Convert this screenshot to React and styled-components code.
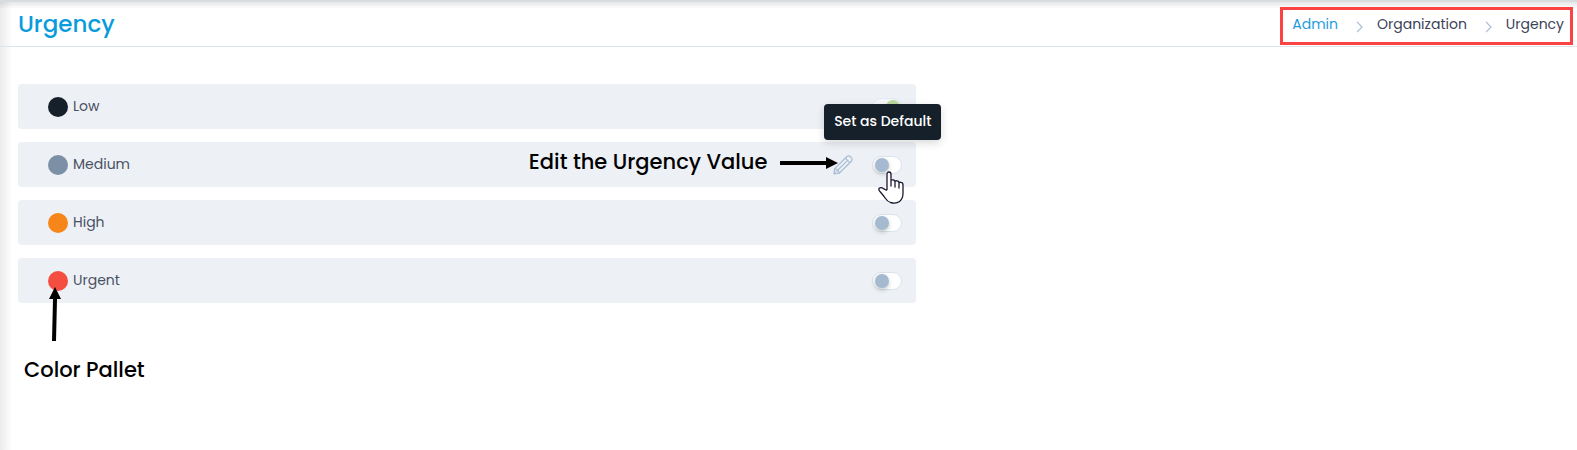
import { useState } from "react";
import styled, { createGlobalStyle } from "styled-components";

const GlobalStyle = createGlobalStyle`
    * {
        box-sizing: border-box;
    }

    body {
        margin: 0;
        background: #fff;
        color: #3c4257;
        font-family: Poppins, Inter, sans-serif;
        font-size: 14px;
    }
`;

const Page = styled.div`
    min-height: 100vh;
    background:
        linear-gradient(#d9dcdf, #d9dcdf) top / 100% 2px no-repeat,
        linear-gradient(rgba(0, 0, 0, 0.12), transparent) top / 100% 9px no-repeat,
        linear-gradient(to right, rgba(0, 0, 0, 0.08), transparent) left / 12px 100% no-repeat;
`;

const Header = styled.header`
    display: flex;
    align-items: center;
    justify-content: space-between;
    height: 47px;
    padding: 5px 4px 0 18px;
    border-bottom: 1px solid #dce3ea;
`;

const Title = styled.h1`
    margin: 0;
    padding-bottom: 4px;
    color: #0a9bdc;
    font-size: 23px;
    font-weight: 500;
    line-height: 36px;
`;

const Breadcrumb = styled.nav`
    display: flex;
    align-items: center;
    height: 38px;
    padding: 0 6px 2px 9px;
    border: 3px solid #fb4343;
    font-size: 14px;

    svg {
        margin: 4px 14px 0 18px;
    }
`;

const Crumb = styled.a`
    color: ${props => props.$active ? '#1f9cdb' : '#3c4257'};
    text-decoration: none;
`;

const Content = styled.main`
    padding: 37px 18px;
`;

const List = styled.ul`
    display: flex;
    flex-direction: column;
    gap: 13px;
    width: 58.3%;
    margin: 0;
    padding: 0;
    list-style: none;
`;

const Row = styled.li`
    display: flex;
    align-items: center;
    height: 45px;
    padding: 0 14px 0 30px;
    border-radius: 4px;
    background: #edf0f5;
`;

const Swatch = styled.button`
    position: relative;
    width: 20px;
    height: 20px;
    margin-right: 5px;
    padding: 0;
    border: 0;
    border-radius: 50%;
    background: ${props => props.$color};
    cursor: pointer;
`;

const Name = styled.span`
    flex: 1;
    padding-bottom: 2px;
    color: #4a5064;
    font-size: 14px;
    line-height: 22px;
`;

const EditButton = styled.button`
    position: relative;
    display: flex;
    margin-right: 19px;
    padding: 0;
    border: 0;
    background: none;
    cursor: pointer;
`;

const Note = styled.p`
    margin: 0;
    color: #000;
    font-size: 21px;
    font-weight: 500;
    line-height: 32px;
    white-space: nowrap;
`;

const EditNote = styled(Note)`
    margin-right: 66px;
    padding-bottom: 6px;
`;

const PalletNote = styled(Note)`
    margin: 51px 0 0 6px;
`;

const EditArrow = styled.svg`
    position: absolute;
    top: 1px;
    right: 15px;
`;

const PalletArrow = styled.svg`
    position: absolute;
    top: 16px;
    left: 0;
`;

const ToggleWrap = styled.span`
    position: relative;
    display: flex;
    opacity: ${props => props.$faded ? 0.5 : 1};
`;

const Toggle = styled.input`
    appearance: none;
    width: 30px;
    height: 18px;
    margin: 0;
    padding: 1px 2px;
    border: 1px solid #dbe3ec;
    border-radius: 9px;
    background: #fff;
    cursor: pointer;

    &::before {
        content: "";
        display: block;
        width: 14px;
        height: 14px;
        border-radius: 50%;
        background: #a5b9d1;
        box-shadow: 0 2px 4px rgba(60, 80, 60, 0.3);
    }

    &:checked::before {
        margin-left: 11px;
        background: #8bc34a;
    }
`;

const Tooltip = styled.span`
    position: absolute;
    right: -39px;
    bottom: 34px;
    z-index: 1;
    padding: 6px 10px 8px;
    border-radius: 4px;
    background: #15202b;
    box-shadow: 0 3px 8px rgba(0, 0, 0, 0.15);
    color: #fff;
    font-size: 14px;
    font-weight: 500;
    line-height: 22px;
    white-space: nowrap;
`;

const Pointer = styled.svg`
    position: absolute;
    top: 15px;
    left: 6px;
    z-index: 1;
    pointer-events: none;
`;

const levels = [
    { name: "Low", color: "#15202b" },
    { name: "Medium", color: "#7b8fa5" },
    { name: "High", color: "#f6861a" },
    { name: "Urgent", color: "#f34e40" },
];

function Chevron(){
    return(
        <svg width="7" height="12" viewBox="0 0 7 12" fill="none" stroke="#a9bdd5" strokeWidth="1.2" aria-hidden="true">
            <path d="M1 .8 L6 6 L1 11.2" />
        </svg>
    )
}

function Pencil(){
    return(
        <svg width="20" height="20" viewBox="0 0 20 20" fill="none" stroke="#a9bdd5" strokeWidth="1.2" strokeLinejoin="round" aria-hidden="true">
            <path d="M1 19 L1.6 13.6 L13.7 1.8 Q15.5 .1 17.6 1.8 L18.3 2.6 Q20 4.7 18.1 6.5 L6.2 18.2 Z" />
            <path d="M1.6 13.6 Q3.8 13.6 4.1 15.8 Q6.2 16 6.2 18.2 M4.1 15.8 L14.4 5.6 M12.4 3.2 L16.7 7.7 M1.3 16.5 L3.4 18.6" />
        </svg>
    )
}

export default function App(){

    const [selected, setSelected] = useState("Low");

    return<>
        <GlobalStyle />
        <Page>
            <Header>
                <Title>Urgency</Title>
                <Breadcrumb aria-label="Breadcrumb">
                    <Crumb href="#admin" $active>Admin</Crumb>
                    <Chevron />
                    <Crumb href="#organization">Organization</Crumb>
                    <Chevron />
                    <Crumb href="#urgency" aria-current="page">Urgency</Crumb>
                </Breadcrumb>
            </Header>

            <Content>
                <List>
                    {levels.map(({ name, color }) => (
                        <Row key={name}>
                            <Swatch $color={color} aria-label={`${name} color`}>
                                {name === "Urgent" && (
                                    <PalletArrow width="14" height="54" viewBox="0 0 14 54" aria-hidden="true">
                                        <path d="M7 0 L13 12 H9 L8 54 H4 L5 12 H1 Z" />
                                    </PalletArrow>
                                )}
                            </Swatch>
                            <Name>{name}</Name>
                            {name === "Medium" && <>
                                <EditNote>Edit the Urgency Value</EditNote>
                                <EditButton aria-label="Edit">
                                    <Pencil />
                                    <EditArrow width="58" height="14" viewBox="0 0 58 14" aria-hidden="true">
                                        <path d="M0 5 H46 V1 L58 7 L46 13 V9 H0 Z" />
                                    </EditArrow>
                                </EditButton>
                            </>}
                            <ToggleWrap $faded={name === "Low"}>
                                <Toggle
                                    type="checkbox"
                                    aria-label={`Set ${name} as default`}
                                    checked={selected === name}
                                    onChange={() => setSelected(name)}
                                />
                                {name === "Medium" && <>
                                    <Tooltip role="tooltip">Set as Default</Tooltip>
                                    <Pointer width="26" height="33" viewBox="0 0 26 33" aria-hidden="true">
                                        <path d="M9 19 V3.5 Q9 1 11 1 Q13 1 13 3.5 V15 V10.5 Q13 8.6 15 8.8 Q17 9 17 11 V16 V11.5 Q17 9.5 19 9.8 Q21 10 21 12 V17 V13 Q21 11 23 11.3 Q25 11.5 25 14 V22 Q25 28 21.5 30.5 Q18 33 12.5 31.5 Q9.5 30.5 7.5 27.5 Q5.5 24.5 2.8 21.5 Q0 18.5 1.2 17.3 Q3 15.8 5.5 17.6 L9 19.5" fill="#fff" stroke="#1c1730" strokeWidth="1.3" strokeLinejoin="round" />
                                    </Pointer>
                                </>}
                            </ToggleWrap>
                        </Row>
                    ))}
                </List>
                <PalletNote>Color Pallet</PalletNote>
            </Content>
        </Page>
    </>
};
